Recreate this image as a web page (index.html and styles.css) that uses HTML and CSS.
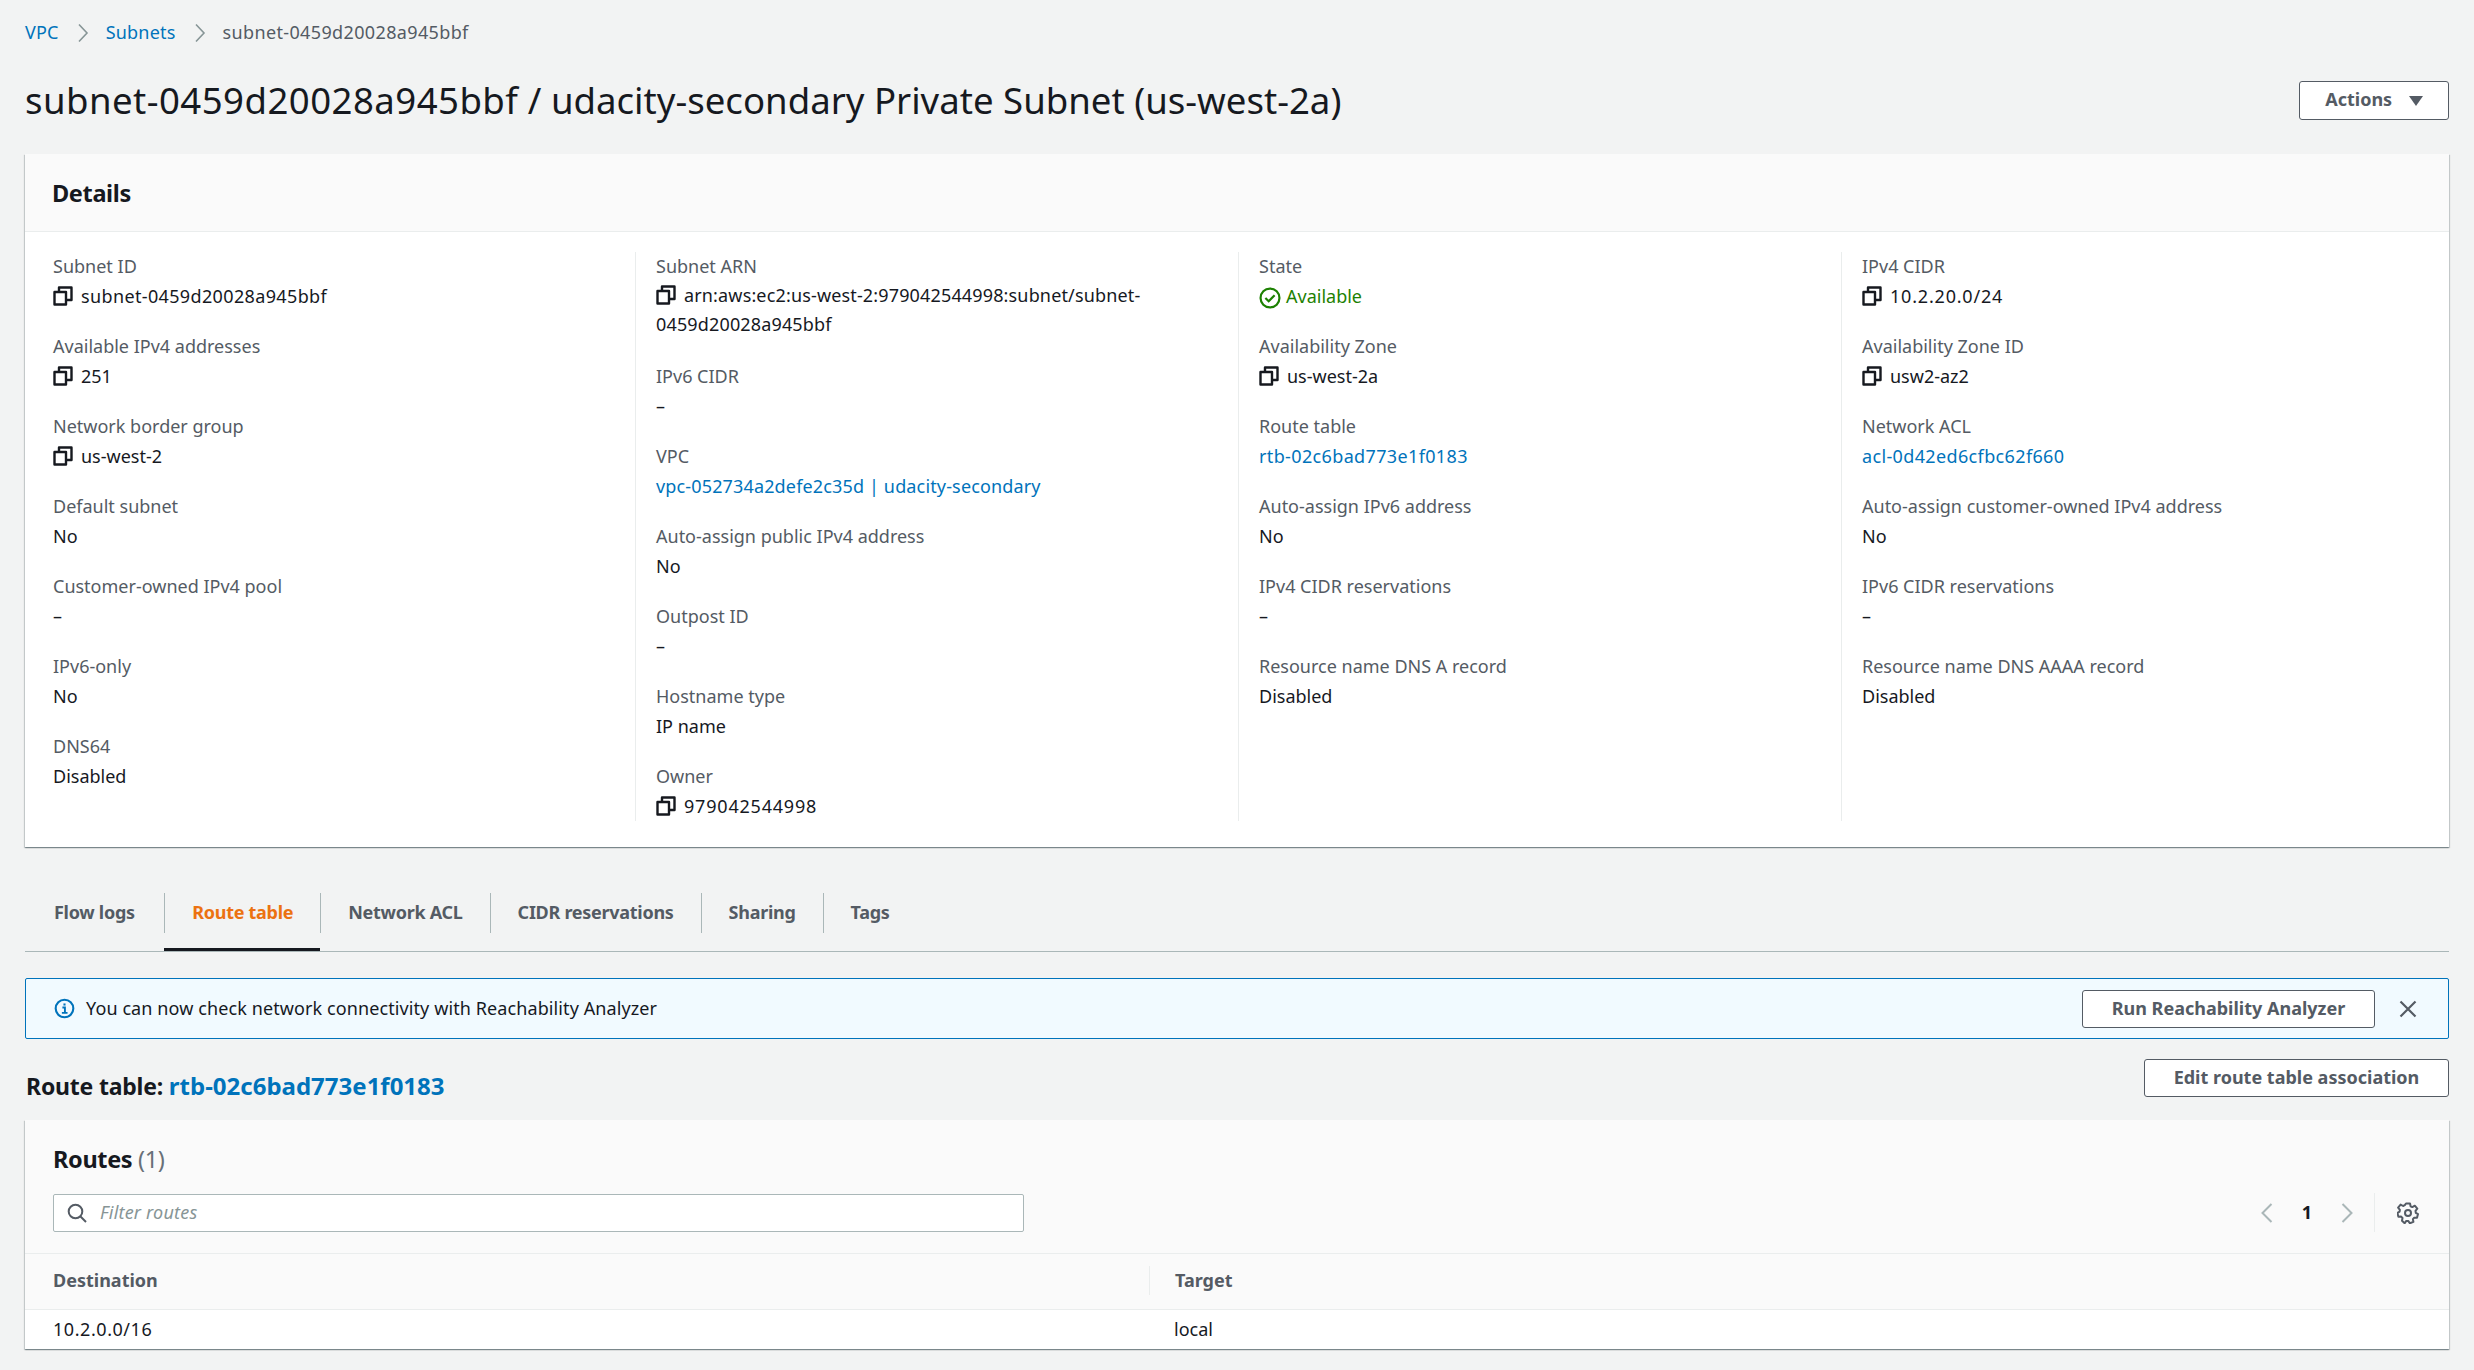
FILE: index.html
```html
<!DOCTYPE html>
<html lang="en">
<head>
    <meta charset="UTF-8">
    <title>subnet-0459d20028a945bbf</title>
    <link rel="stylesheet" href="styles.css">
</head>
<body>
    <svg class="defs">
        <symbol id="copy" viewBox="0 0 20 20">
            <path d="M1.500 6h11.500v12.500H1.500z M6 6V1.500h12.500V14H13" fill="none" stroke="currentColor" stroke-width="2.400" stroke-linejoin="round"/>
        </symbol>
    </svg>

    <nav class="breadcrumb">
        <a href="#">VPC</a>
        <svg class="crumb-sep" viewBox="0 0 12 20"><path d="M2 1.500l8 8.500-8 8.500" fill="none" stroke="currentColor" stroke-width="1.600"/></svg>
        <a href="#">Subnets</a>
        <svg class="crumb-sep" viewBox="0 0 12 20"><path d="M2 1.500l8 8.500-8 8.500" fill="none" stroke="currentColor" stroke-width="1.600"/></svg>
        <span class="id">subnet-0459d20028a945bbf</span>
    </nav>

    <header class="page-head">
        <h1><span class="title-id">subnet-0459d20028a945bbf</span> / udacity-secondary Private Subnet (us-west-2a)</h1>
        <button class="btn btn-actions">Actions <svg class="caret" viewBox="0 0 14 10"><path d="M0 0h14L7 10z" fill="currentColor"/></svg></button>
    </header>

    <section class="card">
        <div class="card-head"><h2>Details</h2></div>
        <div class="details">
            <div class="col">
                <div class="item"><div class="label">Subnet ID</div><div class="value"><svg class="copy"><use href="#copy"/></svg><span class="id">subnet-0459d20028a945bbf</span></div></div>
                <div class="item"><div class="label">Available IPv4 addresses</div><div class="value"><svg class="copy"><use href="#copy"/></svg>251</div></div>
                <div class="item"><div class="label">Network border group</div><div class="value"><svg class="copy"><use href="#copy"/></svg>us-west-2</div></div>
                <div class="item"><div class="label">Default subnet</div><div class="value">No</div></div>
                <div class="item"><div class="label">Customer-owned IPv4 pool</div><div class="value">–</div></div>
                <div class="item"><div class="label">IPv6-only</div><div class="value">No</div></div>
                <div class="item"><div class="label">DNS64</div><div class="value">Disabled</div></div>
            </div>
            <div class="col">
                <div class="item"><div class="label">Subnet ARN</div><div class="value value-wrap"><svg class="copy"><use href="#copy"/></svg><span class="arn">arn:aws:ec2:us-west-2:979042544998:subnet/subnet-<br>0459d20028a945bbf</span></div></div>
                <div class="item"><div class="label">IPv6 CIDR</div><div class="value">–</div></div>
                <div class="item"><div class="label">VPC</div><div class="value"><a class="arn" href="#">vpc-052734a2defe2c35d | udacity-secondary</a></div></div>
                <div class="item"><div class="label">Auto-assign public IPv4 address</div><div class="value">No</div></div>
                <div class="item"><div class="label">Outpost ID</div><div class="value">–</div></div>
                <div class="item"><div class="label">Hostname type</div><div class="value">IP name</div></div>
                <div class="item"><div class="label">Owner</div><div class="value"><svg class="copy"><use href="#copy"/></svg><span class="num">979042544998</span></div></div>
            </div>
            <div class="col">
                <div class="item"><div class="label">State</div><div class="value status"><svg class="status-icon" viewBox="0 0 20 20"><circle cx="10" cy="10" r="8.600" fill="none" stroke="currentColor" stroke-width="2"/><path d="M5.800 10l3 3 5.400-5.600" fill="none" stroke="currentColor" stroke-width="2"/></svg>Available</div></div>
                <div class="item"><div class="label">Availability Zone</div><div class="value"><svg class="copy"><use href="#copy"/></svg>us-west-2a</div></div>
                <div class="item"><div class="label">Route table</div><div class="value"><a class="id" href="#">rtb-02c6bad773e1f0183</a></div></div>
                <div class="item"><div class="label">Auto-assign IPv6 address</div><div class="value">No</div></div>
                <div class="item"><div class="label">IPv4 CIDR reservations</div><div class="value">–</div></div>
                <div class="item"><div class="label">Resource name DNS A record</div><div class="value">Disabled</div></div>
            </div>
            <div class="col">
                <div class="item"><div class="label">IPv4 CIDR</div><div class="value"><svg class="copy"><use href="#copy"/></svg><span class="num">10.2.20.0/24</span></div></div>
                <div class="item"><div class="label">Availability Zone ID</div><div class="value"><svg class="copy"><use href="#copy"/></svg>usw2-az2</div></div>
                <div class="item"><div class="label">Network ACL</div><div class="value"><a class="id" href="#">acl-0d42ed6cfbc62f660</a></div></div>
                <div class="item"><div class="label">Auto-assign customer-owned IPv4 address</div><div class="value">No</div></div>
                <div class="item"><div class="label">IPv6 CIDR reservations</div><div class="value">–</div></div>
                <div class="item"><div class="label">Resource name DNS AAAA record</div><div class="value">Disabled</div></div>
            </div>
        </div>
    </section>

    <div class="tabs">
        <div class="tab"><span class="tab-label">Flow logs</span></div>
        <div class="tab active"><span class="tab-label">Route table</span></div>
        <div class="tab"><span class="tab-label">Network ACL</span></div>
        <div class="tab"><span class="tab-label">CIDR reservations</span></div>
        <div class="tab"><span class="tab-label">Sharing</span></div>
        <div class="tab"><span class="tab-label">Tags</span></div>
    </div>

    <div class="flash">
        <svg class="flash-icon" viewBox="0 0 20 20"><circle cx="10" cy="10" r="8.400" fill="none" stroke="currentColor" stroke-width="2"/><path d="M8 9h2.400v5M7.500 14.200h5.400" fill="none" stroke="currentColor" stroke-width="1.800"/><path d="M9 5.200h2v2H9z" fill="currentColor"/></svg>
        <span class="flash-text">You can now check network connectivity with Reachability Analyzer</span>
        <button class="btn btn-run">Run Reachability Analyzer</button>
        <svg class="flash-close" viewBox="0 0 18 18"><path d="M1.500 1.500l15 15M16.500 1.500l-15 15" fill="none" stroke="currentColor" stroke-width="2.200"/></svg>
    </div>

    <div class="route-head">
        <h3>Route table: <a href="#">rtb-02c6bad773e1f0183</a></h3>
        <button class="btn btn-edit">Edit route table association</button>
    </div>

    <section class="card">
        <div class="routes-head">
            <h2>Routes <span class="count">(1)</span></h2>
            <div class="routes-tools">
                <div class="filter">
                    <svg class="search-icon" viewBox="0 0 20 20"><circle cx="8.500" cy="8.500" r="6.800" fill="none" stroke="currentColor" stroke-width="2"/><path d="M13.500 13.500l5.500 5.500" fill="none" stroke="currentColor" stroke-width="2"/></svg>
                    <span class="placeholder">Filter routes</span>
                </div>
                <div class="pager">
                    <svg class="pager-arrow" viewBox="0 0 12 20"><path d="M10.500 1l-9 9 9 9" fill="none" stroke="currentColor" stroke-width="2"/></svg>
                    <span class="page-num">1</span>
                    <svg class="pager-arrow" viewBox="0 0 12 20"><path d="M1.500 1l9 9-9 9" fill="none" stroke="currentColor" stroke-width="2"/></svg>
                    <div class="pager-sep">
                        <svg class="gear" viewBox="0 0 22 22"><path d="M9 1.500h4l.6 2.800 1.700.8 2.500-1.400 2.500 3-1.800 2.200.3 1.900 2.200 1.300-1 3.700-2.800-.1-1.300 1.400.5 2.800-3.600 1.400-1.600-2.400h-1.900l-1.600 2.400L5 18.800l.5-2.800-1.300-1.400-2.800.1-1-3.700 2.200-1.300.3-1.900-1.800-2.200 2.500-3 2.500 1.400 1.700-.8z" fill="none" stroke="currentColor" stroke-width="2" stroke-linejoin="round"/><circle cx="11" cy="11" r="3" fill="none" stroke="currentColor" stroke-width="2"/></svg>
                    </div>
                </div>
            </div>
        </div>
        <table class="routes">
            <thead>
                <tr><th class="col-dest">Destination</th><th><span class="th-sep">Target</span></th></tr>
            </thead>
            <tbody>
                <tr><td class="col-dest"><span class="num-tight">10.2.0.0/16</span></td><td class="col-target">local</td></tr>
            </tbody>
        </table>
    </section>
</body>
</html>
```

FILE: styles.css
```css
* {
    box-sizing: border-box;
}

body {
    margin: 0;
    padding: 0 25px;
    height: 1370px;
    overflow: hidden;
    background: #f2f3f3;
    color: #16191f;
    font-family: "Noto Sans", sans-serif;
    font-size: 18px;
    line-height: 29.3px;
}

a {
    color: #0073bb;
    text-decoration: none;
}

h1, h2, h3 {
    margin: 0;
}

.defs {
    display: none;
}

/* digits run wider in the original face */
.id {
    letter-spacing: .36px;
}

.arn {
    letter-spacing: .15px;
}

.num {
    letter-spacing: .8px;
}

.num-tight {
    letter-spacing: .55px;
}

/* top of page */
.breadcrumb {
    height: 66px;
    display: flex;
    align-items: center;
    color: #545b64;
    letter-spacing: .2px;
}

.crumb-sep {
    width: 12px;
    height: 20px;
    margin: 0 17px 0 18px;
    color: #879596;
}

.page-head {
    height: 68px;
    margin-bottom: 20px;
    display: flex;
    align-items: center;
    justify-content: space-between;
}

h1 {
    font-size: 36.6px;
    font-weight: 400;
    line-height: 48px;
}

.title-id {
    letter-spacing: .45px;
}

.btn {
    height: 38px;
    padding: 0 0 2px;
    background: #fff;
    border: 1.5px solid #545b64;
    border-radius: 3px;
    color: #545b64;
    font-family: "Noto Sans", sans-serif;
    font-size: 18px;
    font-weight: 700;
}

.btn-actions {
    width: 150px;
    height: 39px;
}

.caret {
    width: 14px;
    height: 10px;
    margin-left: 12px;
}

/* cards */
.card {
    background: #fff;
    box-shadow: 0 1px 1px 0 rgba(0, 28, 36, .3), 1px 1px 1px 0 rgba(0, 28, 36, .15), -1px 1px 1px 0 rgba(0, 28, 36, .15);
}

.card-head {
    height: 78px;
    padding-left: 27px;
    display: flex;
    align-items: center;
    background: #fafafa;
    border-bottom: 1px solid #eaeded;
}

.card h2 {
    font-size: 23.5px;
    font-weight: 700;
    line-height: 32px;
    letter-spacing: -.35px;
}

.details {
    height: 615px;
    padding: 20px 0 28px 7px;
    display: grid;
    grid-template-columns: repeat(4, 603px);
}

.col {
    padding-left: 20px;
    border-left: 1px solid #eaeded;
}

.col:first-child {
    border-left: 1px solid transparent;
}

.item {
    margin-bottom: 21px;
}

.item:last-child {
    margin-bottom: 0;
}

.label {
    line-height: 29px;
    color: #545b64;
}

.value {
    line-height: 30px;
}

.value-wrap {
    margin-bottom: 22px;
    line-height: 29.3px;
}

.copy {
    width: 20px;
    height: 20px;
    margin-right: 8px;
    vertical-align: -3px;
    color: #16191f;
}

.status {
    color: #1d8102;
}

.status-icon {
    width: 22px;
    height: 22px;
    margin-right: 5px;
    vertical-align: -6px;
}

/* tabs */
.tabs {
    margin-top: 46px;
    display: flex;
    height: 59px;
    border-bottom: 1px solid #aab7b8;
}

.tab {
    height: 58px;
    border-bottom: 3px solid transparent;
}

.tab-label {
    display: block;
    height: 40px;
    padding: 5px 27px;
    border-left: 1px solid #aab7b8;
    color: #545b64;
    font-weight: 700;
    letter-spacing: -.28px;
}

.tab:first-child .tab-label {
    border-left: 0;
    padding: 5px 29.5px 5px 29px;
}

.tab.active {
    border-bottom-color: #16191f;
}

.tab.active .tab-label {
    color: #ec7211;
}

/* info banner */
.flash {
    margin-top: 26px;
    height: 61px;
    padding: 0 31px 0 28px;
    display: flex;
    align-items: center;
    background: #f1faff;
    border: 1px solid #0073bb;
    border-radius: 2px;
}

.flash-icon {
    width: 21px;
    height: 21px;
    margin-right: 11px;
    color: #0073bb;
}

.flash-text {
    flex: 1;
    letter-spacing: .1px;
}

.btn-run {
    width: 293px;
    margin-right: 24px;
}

.flash-close {
    width: 18px;
    height: 18px;
    color: #545b64;
}

/* route table heading */
.route-head {
    margin-top: 20px;
    margin-bottom: 18px;
    height: 43px;
    display: flex;
    justify-content: space-between;
}

h3 {
    align-self: flex-end;
    padding-left: 1px;
    font-size: 23px;
    font-weight: 700;
    line-height: 32px;
    letter-spacing: -.2px;
}

h3 a {
    font-size: 24px;
    letter-spacing: 0;
}

.btn-edit {
    width: 305px;
}

.routes-head {
    height: 134px;
    padding: 23px 30px 0 28px;
    background: #fafafa;
    border-bottom: 1px solid #eaeded;
}

.count {
    color: #687078;
    font-weight: 400;
}

.routes-tools {
    margin-top: 18px;
    display: flex;
    align-items: center;
    justify-content: space-between;
}

.filter {
    width: 971px;
    height: 38px;
    padding-left: 13px;
    display: flex;
    align-items: center;
    background: #fff;
    border: 1px solid #aab7b8;
    border-radius: 2px;
}

.search-icon {
    width: 20px;
    height: 20px;
    margin-right: 13px;
    color: #545b64;
}

.placeholder {
    color: #879596;
    font-style: italic;
    letter-spacing: .2px;
}

.pager {
    display: flex;
    align-items: center;
}

.pager-arrow {
    width: 12px;
    height: 20px;
    color: #aab7b8;
}

.page-num {
    width: 68px;
    text-align: center;
    font-weight: 700;
}

.pager-sep {
    height: 39px;
    margin-left: 21px;
    padding-left: 22px;
    display: flex;
    align-items: center;
    border-left: 1px solid #eaeded;
}

.gear {
    width: 22px;
    height: 22px;
    color: #545b64;
}

/* routes table */
.routes {
    width: 100%;
    border-collapse: collapse;
}

.routes th {
    height: 55px;
    padding: 0 0 2px;
    background: #fafafa;
    border-bottom: 1px solid #eaeded;
    color: #545b64;
    font-weight: 700;
    text-align: left;
}

.routes td {
    height: 40px;
    padding: 0;
}

.routes .col-dest {
    width: 1124px;
    padding-left: 28px;
}

.routes .col-target {
    padding-left: 25px;
}

.th-sep {
    display: block;
    padding-left: 25px;
    border-left: 1px solid #eaeded;
}
```
